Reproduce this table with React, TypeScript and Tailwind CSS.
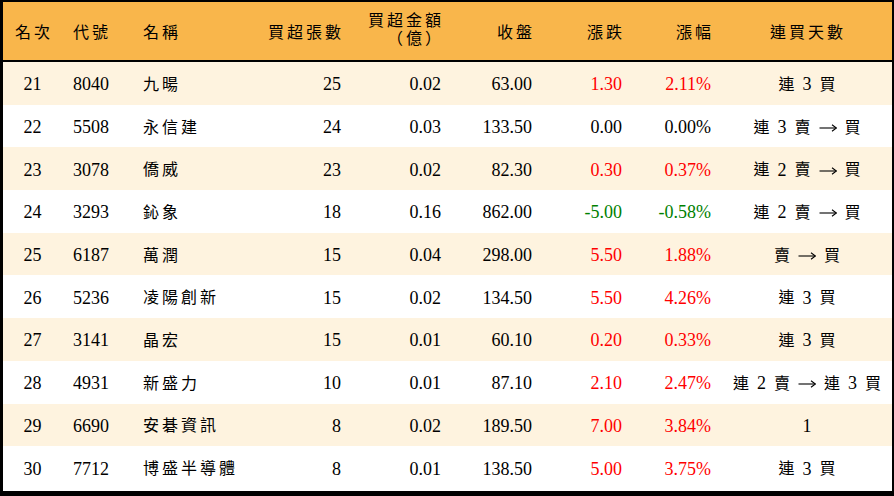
import React from "react";

type Row = {
  rank: number;
  code: string;
  name: string;
  lots: number;
  amount: string;
  close: string;
  change: string;
  pct: string;
  days: string;
  tone: "up" | "flat" | "down";
};

const rows: Row[] = [
  { rank: 21, code: "8040", name: "九暘", lots: 25, amount: "0.02", close: "63.00", change: "1.30", pct: "2.11%", days: "連 3 買", tone: "up" },
  { rank: 22, code: "5508", name: "永信建", lots: 24, amount: "0.03", close: "133.50", change: "0.00", pct: "0.00%", days: "連 3 賣 → 買", tone: "flat" },
  { rank: 23, code: "3078", name: "僑威", lots: 23, amount: "0.02", close: "82.30", change: "0.30", pct: "0.37%", days: "連 2 賣 → 買", tone: "up" },
  { rank: 24, code: "3293", name: "鈊象", lots: 18, amount: "0.16", close: "862.00", change: "-5.00", pct: "-0.58%", days: "連 2 賣 → 買", tone: "down" },
  { rank: 25, code: "6187", name: "萬潤", lots: 15, amount: "0.04", close: "298.00", change: "5.50", pct: "1.88%", days: "賣 → 買", tone: "up" },
  { rank: 26, code: "5236", name: "凌陽創新", lots: 15, amount: "0.02", close: "134.50", change: "5.50", pct: "4.26%", days: "連 3 買", tone: "up" },
  { rank: 27, code: "3141", name: "晶宏", lots: 15, amount: "0.01", close: "60.10", change: "0.20", pct: "0.33%", days: "連 3 買", tone: "up" },
  { rank: 28, code: "4931", name: "新盛力", lots: 10, amount: "0.01", close: "87.10", change: "2.10", pct: "2.47%", days: "連 2 賣 → 連 3 買", tone: "up" },
  { rank: 29, code: "6690", name: "安碁資訊", lots: 8, amount: "0.02", close: "189.50", change: "7.00", pct: "3.84%", days: "1", tone: "up" },
  { rank: 30, code: "7712", name: "博盛半導體", lots: 8, amount: "0.01", close: "138.50", change: "5.00", pct: "3.75%", days: "連 3 買", tone: "up" },
];

const grid = "grid grid-cols-[59px_70px_118px_101px_100px_91px_90px_89px_1fr]";

function Arrow() {
  return (
    <svg width="18" height="10" viewBox="0 0 18 10" className="mt-[1px]">
      <path d="M0.5 5 H17.2" stroke="#000" strokeWidth="1.1" fill="none" />
      <path d="M13 1.8 L17.4 5 L13 8.2" stroke="#000" strokeWidth="1.1" fill="none" strokeLinejoin="miter" />
    </svg>
  );
}

function Days({ text }: { text: string }) {
  const tokens = text.split(" ");
  return (
    <div className="flex items-center justify-center gap-[8px] pl-[1px]">
      {tokens.map((t, i) => {
        if (t === "→") return <Arrow key={i} />;
        if (/^\d+$/.test(t)) {
          return (
            <span key={i} className="text-[18px]">
              {t}
            </span>
          );
        }
        return (
          <span key={i} className="text-[16px]">
            {t}
          </span>
        );
      })}
    </div>
  );
}

export default function App() {
  return (
    <div
      className="w-[894px] h-[496px] bg-white text-black overflow-hidden"
      style={{ fontFamily: '"Liberation Serif", "Noto Sans CJK TC", serif' }}
    >
      <div className="w-full h-full border-black border-t-2 border-l-[3px] border-r-2 border-b-[5px] flex flex-col">
        <div className={`${grid} h-[60px] pt-[3px] bg-[#f9b64b] border-b-2 border-black text-[16px] tracking-[3px] items-center`}>
          <div className="text-center pl-[3px]">名次</div>
          <div className="pl-[11px]">代號</div>
          <div className="pl-[11px]">名稱</div>
          <div className="text-right pr-[7px]">買超張數</div>
          <div className="text-right pr-[7px] leading-[18px] pb-[6px]">
            <div>買超金額</div>
            <div>（億）</div>
          </div>
          <div className="text-right pr-[7px]">收盤</div>
          <div className="text-right pr-[7px]">漲跌</div>
          <div className="text-right pr-[7px]">漲幅</div>
          <div className="text-center pl-[3px]">連買天數</div>
        </div>
        {rows.map((r, i) => {
          const color =
            r.tone === "up" ? "text-[#ff0000]" : r.tone === "down" ? "text-[#008000]" : "text-black";
          return (
            <div
              key={r.rank}
              className={`${grid} h-[42.7px] pt-[3px] items-center text-[18px] ${i % 2 === 0 ? "bg-[#fef3df]" : "bg-white"}`}
            >
              <div className="text-center">{r.rank}</div>
              <div className="pl-[11px]">{r.code}</div>
              <div className="pl-[11px] text-[16px] tracking-[3px]">{r.name}</div>
              <div className="text-right pr-[10px]">{r.lots}</div>
              <div className="text-right pr-[10px]">{r.amount}</div>
              <div className="text-right pr-[10px]">{r.close}</div>
              <div className={`text-right pr-[10px] ${color}`}>{r.change}</div>
              <div className={`text-right pr-[10px] ${color}`}>{r.pct}</div>
              <Days text={r.days} />
            </div>
          );
        })}
      </div>
    </div>
  );
}
